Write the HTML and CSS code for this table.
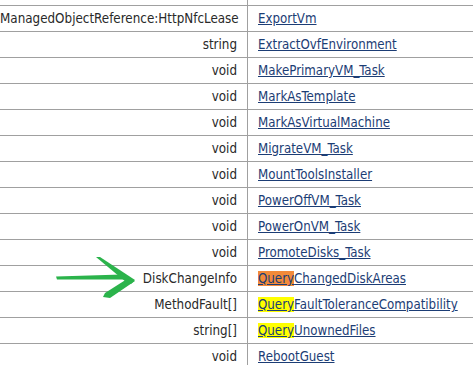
FILE: index.html
```html
<!DOCTYPE html>
<html>
<head>
<meta charset="utf-8">
<link rel="stylesheet" href="styles.css">
</head>
<body>
<table class="methods">
  <tr><td class="type"></td><td class="name"></td></tr>
  <tr><td class="type">ManagedObjectReference:HttpNfcLease</td><td class="name"><a href="#">ExportVm</a></td></tr>
  <tr><td class="type">string</td><td class="name"><a href="#">ExtractOvfEnvironment</a></td></tr>
  <tr><td class="type">void</td><td class="name"><a href="#">MakePrimaryVM_Task</a></td></tr>
  <tr><td class="type">void</td><td class="name"><a href="#">MarkAsTemplate</a></td></tr>
  <tr><td class="type">void</td><td class="name"><a href="#">MarkAsVirtualMachine</a></td></tr>
  <tr><td class="type">void</td><td class="name"><a href="#">MigrateVM_Task</a></td></tr>
  <tr><td class="type">void</td><td class="name"><a href="#">MountToolsInstaller</a></td></tr>
  <tr><td class="type">void</td><td class="name"><a href="#">PowerOffVM_Task</a></td></tr>
  <tr><td class="type">void</td><td class="name"><a href="#">PowerOnVM_Task</a></td></tr>
  <tr><td class="type">void</td><td class="name"><a href="#">PromoteDisks_Task</a></td></tr>
  <tr><td class="type">DiskChangeInfo</td><td class="name"><a href="#"><span class="hl-orange">Query</span>ChangedDiskAreas</a></td></tr>
  <tr><td class="type">MethodFault[]</td><td class="name"><a href="#"><span class="hl-yellow">Query</span>FaultToleranceCompatibility</a></td></tr>
  <tr><td class="type">string[]</td><td class="name"><a href="#"><span class="hl-yellow">Query</span>UnownedFiles</a></td></tr>
  <tr class="last"><td class="type">void</td><td class="name"><a href="#">RebootGuest</a></td></tr>
</table>
<svg class="arrow" width="90" height="50" viewBox="0 0 90 50">
  <polygon points="6,24.5 72,22.5 77,27.5 7,27.5" fill="#2bb34b"/>
  <polygon points="46,5 50,5 85,28 81,32 76,30" fill="#2bb34b"/>
  <polygon points="77,27 85,29 60,46 53,45 55,41" fill="#2bb34b"/>
</svg>
</body>
</html>
```
FILE: styles.css
```css
html, body {
  margin: 0;
  padding: 0;
  background: #ffffff;
  overflow: hidden;
}
body {
  position: relative;
  font-family: "DejaVu Sans Condensed", "DejaVu Sans", sans-serif;
  font-size: 13px;
  color: #2a2a2a;
}
.methods {
  border-collapse: collapse;
  table-layout: fixed;
  margin-top: -21px;
  width: 100%;
}
.methods td {
  height: 25px;
  padding: 0 10px;
  border-top: 1px solid #a0a0a0;
  border-bottom: 1px solid #a0a0a0;
  vertical-align: middle;
  white-space: nowrap;
}
.methods tr.last td {
  border-bottom: none;
}
.methods td.type {
  width: 237px;
  padding-left: 0;
  text-align: right;
  font-size: 13.3px;
  border-right: 1px solid #a0a0a0;
}
.methods td.name {
  text-align: left;
  font-size: 13.2px;
}
.methods a {
  color: #1c3d75;
  text-decoration: underline;
}
.hl-orange {
  background: #f28a3a;
}
.hl-yellow {
  background: #ffff00;
}
.arrow {
  position: absolute;
  left: 50px;
  top: 252px;
}
```
